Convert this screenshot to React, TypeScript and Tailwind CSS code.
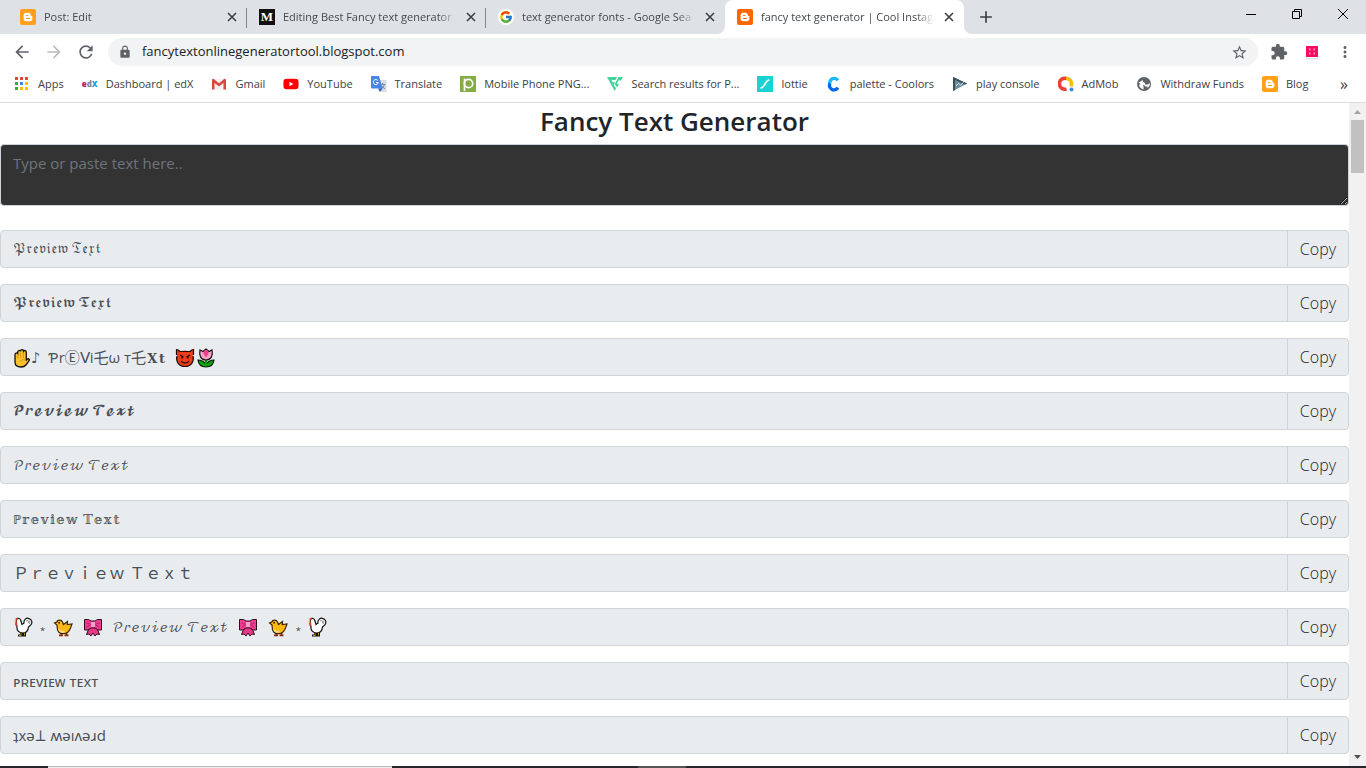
import type { ReactNode } from "react";
import { FaBloggerB, FaYoutube } from "react-icons/fa";
import { FcGoogle } from "react-icons/fc";
import {
  MdAdd,
  MdArrowBack,
  MdArrowForward,
  MdExtension,
  MdLock,
  MdMoreVert,
  MdRefresh,
  MdStarBorder,
} from "react-icons/md";

function Blogger({ color = "bg-[#ff9f1a]" }: { color?: string }) {
  return (
    <span className={`flex size-4 items-center justify-center rounded-xs text-white ${color}`}>
      <FaBloggerB size={10} />
    </span>
  );
}

function MediumLogo() {
  return (
    <span className="flex size-4 items-center justify-center bg-[#111] font-['Liberation_Serif',serif] text-[13px] font-bold text-white">
      M
    </span>
  );
}

function AppsGrid() {
  const colors = ["#ea4335", "#ea4335", "#ea4335", "#34a853", "#4285f4", "#fbbc04", "#34a853", "#fbbc04", "#fbbc04"];
  return (
    <svg width="16" height="16" viewBox="0 0 16 16">
      {colors.map((c, i) => (
        <rect key={i} x={1 + (i % 3) * 5} y={1 + Math.floor(i / 3) * 5} width="3" height="3" fill={c} />
      ))}
    </svg>
  );
}

function EdxLogo() {
  return (
    <span className="flex w-4 justify-center text-[8px] leading-4 font-extrabold text-[#b7206a]">
      e<span className="text-[#7d8a94]">d</span>
      <span className="text-[#1b9ce0]">X</span>
    </span>
  );
}

function GmailLogo() {
  return (
    <svg width="16" height="16" viewBox="0 0 16 16">
      <path d="M2 3h12v10.500H2z" fill="#f2f2f2" />
      <path d="M1 3.500v10h2.500V7L8 10.500 12.500 7v6.500H15v-10L13.500 2.800 8 7.200 2.500 2.800z" fill="#d54b3d" />
    </svg>
  );
}

function TranslateLogo() {
  return (
    <svg width="16" height="16" viewBox="0 0 16 16">
      <path d="M6 4h9.500v12H10z" fill="#d9dce0" />
      <path d="M9 8.500h5.500M11.700 7v1.500M13.500 8.500c-.6 2-1.800 3.300-3 4M10.500 9.500c.7 1.500 2 2.600 3.500 3.200" stroke="#6d8fae" fill="none" />
      <path d="M0 0h8l3.500 12.500H1a1 1 0 0 1-1-1z" fill="#4a85ee" />
      <path d="M7 12.500h4.500L9 16z" fill="#2b5fc4" />
      <path d="M6.800 4.500A2.500 2.500 0 1 0 7.300 6.500H5" stroke="#fff" fill="none" />
    </svg>
  );
}

function PngLogo() {
  return (
    <svg width="16" height="16" viewBox="0 0 16 16">
      <path d="M0 0h16v16H0z" fill="#84ab44" />
      <circle cx="8.500" cy="7.500" r="4.200" stroke="#fff" strokeWidth="1.700" fill="none" />
      <path d="M4.500 2.500v12.500" stroke="#fff" strokeWidth="1.700" />
    </svg>
  );
}

function FlatLogo() {
  return (
    <svg width="16" height="16" viewBox="0 0 16 16" fill="#46d39a">
      <path d="M0 1h10L8.500 4H4.500l1.200 2.300H8L6.800 9 9 12.500 7.700 15z" />
      <path d="M11.500 1H16l-2 3.500h-2.500L9.800 8H12l-2 3.500L7.800 8z" />
    </svg>
  );
}

function LottieLogo() {
  return (
    <svg width="16" height="16" viewBox="0 0 16 16">
      <path d="M0 0h16v16H0z" fill="#19d3d3" />
      <path d="M4 12c4-.5 4-7.500 8-8" stroke="#fff" strokeWidth="1.600" strokeLinecap="round" fill="none" />
    </svg>
  );
}

function CoolorsLogo() {
  return (
    <svg width="16" height="16" viewBox="0 0 16 16" fill="none" strokeWidth="3.400">
      <path d="M11.800 4.500A4.300 4.300 0 0 0 4 8" stroke="#18b8ff" />
      <path d="M4 7.500A4.300 4.300 0 0 0 11.800 11.500" stroke="#0064f5" />
    </svg>
  );
}

function PlayConsoleLogo() {
  return (
    <svg width="16" height="16" viewBox="0 0 16 16">
      <path d="M1 1l14 6.500L1 15z" fill="#6d8d9b" />
      <path d="M1 1l14 6.500-2 1L3 4v10l-2 1z" fill="#37505c" />
      <path d="M4 10l2.500-2.500 2 1.500L11.500 6.500" stroke="#cfe3ec" fill="none" />
    </svg>
  );
}

function AdMobLogo() {
  return (
    <svg width="16" height="16" viewBox="0 0 16 16" fill="none" strokeWidth="3.600">
      <path d="M8.500 2.500A5.500 5.500 0 1 0 8.500 13" stroke="#ea4335" />
      <path d="M8 2.500c3.500 0 5.500 2.200 5.500 5.500v2.500" stroke="#fbbc04" />
      <circle cx="13.500" cy="13.500" r="2" fill="#4285f4" />
    </svg>
  );
}

function Globe() {
  return (
    <svg width="16" height="16" viewBox="0 0 16 16">
      <circle cx="8" cy="8" r="7" fill="#5f6368" />
      <path d="M10 2.500L7 4v2l2 1v1.500h3L14 7c0 2-1 4-2.500 5V10.500H9.500L8 9H5.500L2.500 6.500" fill="#fff" />
      <path d="M3 8.500h3l1.500 1.500v3.500C5 13 3.200 11 3 8.500z" fill="#fff" />
    </svg>
  );
}

function CloseIcon() {
  return (
    <svg width="14" height="14" viewBox="0 0 14 14" stroke="currentColor" strokeWidth="1.600">
      <path d="M3 3l8 8M11 3l-8 8" />
    </svg>
  );
}

/* pixel style emoji */

function Hand() {
  return (
    <svg className="mx-px inline-block align-[-5px]" width="16" height="20" viewBox="0 0 16 20">
      <path
        d="M1 6.500c0-1.500 2-2 2.700-1V4c0-1.700 2.300-2 2.900-.8 0-2.200 3-2.200 3 0 .7-1.200 2.700-.8 2.700 1V12l1.200-1c1.300-.8 2.400.6 1.600 1.700l-3.200 4.300C10.700 18.500 9.500 19 7 19c-4 0-6-1.500-6-5z"
        fill="#fcc12e"
        stroke="#111"
        strokeWidth="1.300"
      />
      <path d="M3.800 6v4.500M6.600 4.500V10M9.400 4.500V10M6 14c1-2 3-3 5.500-2" stroke="#d0901a" strokeWidth=".8" fill="none" />
    </svg>
  );
}

function Devil() {
  return (
    <svg className="mx-px inline-block align-[-5px]" width="20" height="20" viewBox="0 0 20 20">
      <path
        d="M1.500 1.500c1.500 0 3 1 4.500 1.800 2.500-1 5.500-1 8 0 1.500-.8 3-1.800 4.500-1.800.5 2.500 0 4.500-.8 6C19.500 13.500 16 18.500 10 18.500S.5 13.500 2.300 7.500C1.500 6 1 4 1.500 1.500z"
        fill="#f03c18"
      />
      <path
        d="M1.500 7V1.500C3 1.500 4 2.500 5 3.500h10c1-1 2-2 3.500-2V7M2 8c-1.500 5.500 2 10.500 8 10.500S19.500 13.500 18 8"
        fill="none"
        stroke="#1a0b06"
        strokeWidth="1.200"
      />
      <path d="M5 7l3.500 2M15 7l-3.500 2M6 13c1.500 2.700 6.500 2.700 8 0" stroke="#1a0b06" strokeWidth="1.300" fill="none" />
      <path d="M6.300 8.500h1.600v2H6.300zM12.100 8.500h1.600v2h-1.600z" fill="#1a0b06" />
    </svg>
  );
}

function Tulip() {
  return (
    <svg className="inline-block align-[-5px]" width="20" height="20" viewBox="0 0 20 20">
      <path d="M10 19C5 19 2.500 16.500 2 12c3 0 5 .5 8 4 3-3.500 5-4 8-4-.5 4.500-3 7-8 7z" fill="#11a011" stroke="#0b1a0b" strokeWidth="1.200" />
      <path d="M9 11h2v6H9z" fill="#11a011" />
      <path d="M4 2l3 1.500L10 1l3 2.500L16 2c1 5-.5 10-6 10S3 7 4 2z" fill="#f5a3c7" stroke="#20080f" strokeWidth="1.200" />
      <path d="M8 2.500h4l.5 3L10 9.500 7.500 5.500z" fill="#ee3f8e" />
    </svg>
  );
}

function Chicken() {
  return (
    <svg className="inline-block align-[-5px]" width="20" height="20" viewBox="0 0 20 20">
      <path d="M5 17.500h4.500v2H5zM9.500 17.500H13v2H9.500zM7 14h6v4H7z" fill="#111" />
      <path
        d="M3.500 2C5 .8 7.500 1.500 7.800 3.500L9 7.500l2-1.500C10.500 3 13 .8 15.500 1.300c3 .5 4.200 3.700 2.700 6L15.500 10c-.3 3.500-2.500 6-5.700 6-4 0-6.300-3-5.800-6.500L3.200 7z"
        fill="#fff"
        stroke="#111"
        strokeWidth="1.200"
      />
      <path d="M13 4c1.500-1 3 0 2.500 2M15.500 3c1.700.8 1.700 2.800.5 4" stroke="#777" strokeWidth=".8" fill="none" />
      <path d="M2.500 1.500L5 .5v2L3 4zM2.300 5.500h1.900v3.200H2.300z" fill="#e03a2b" />
      <path d="M.8 4.800l2.500-1v2z" fill="#f2a51c" />
      <path d="M8 15.500v3M6 18.500h2.500M11.500 15.500v3" stroke="#b08a18" />
    </svg>
  );
}

function Chick() {
  return (
    <svg className="mx-px inline-block align-[-5px]" width="20" height="20" viewBox="0 0 20 20">
      <path d="M6 18.300h4M11.500 18.300h4M8.500 15.500v3M13.500 15.500v3" stroke="#8c2708" strokeWidth="1.700" />
      <path
        d="M1.500 6l2.200-1C4.500 2.500 8.500 2.300 9.500 5l1 2.500 4-3-.2 3 4.700-.5-1.500 4-1 2c-1.200 2.500-3.500 3.700-6.500 3.700C6.500 16.700 4 14 4.300 11L4 8z"
        fill="#fdb813"
        stroke="#3a2508"
        strokeWidth="1.200"
      />
      <path d="M5 10c.5 3 3 4.300 7 4l-2 2C7 15.700 5 14 5 10z" fill="#ffdc84" />
      <path d="M5.300 5h1.600v1.600H5.300z" fill="#241505" />
    </svg>
  );
}

function Bow() {
  return (
    <svg className="mx-px inline-block align-[-5px]" width="20" height="20" viewBox="0 0 20 20">
      <path d="M6.500 10l-3 7.500 2.500-.5 2 2 2-3 2 3 2-2 2.500.5-3-7.500z" fill="#e8388a" stroke="#330a1e" />
      <path d="M1.500 2.500h4L8 4h4l2.500-1.500h4v10.500H15l-3-2H8l-3 2H1.500z" fill="#ee3d8f" stroke="#330a1e" />
      <path d="M8 5h4v5H8z" fill="#f7a1ca" />
      <path d="M3.500 6l4 1.300M3.500 10l4-2M16.500 6l-4 1.300M16.500 10l-4-2" stroke="#b82070" />
    </svg>
  );
}

const tabs = [
  { title: "Post: Edit", icon: <Blogger /> },
  { title: "Editing Best Fancy text generator", icon: <MediumLogo /> },
  {
    title: "text generator fonts - Google Sea",
    icon: (
      <span className="flex size-4 items-center justify-center rounded-full bg-white">
        <FcGoogle size={14} />
      </span>
    ),
  },
  { title: "fancy text generator | Cool Instag", icon: <Blogger color="bg-[#ff6600]" />, active: true },
];

const bookmarks = [
  { label: "Apps", icon: <AppsGrid /> },
  { label: "Dashboard | edX", icon: <EdxLogo /> },
  { label: "Gmail", icon: <GmailLogo /> },
  { label: "YouTube", icon: <FaYoutube size={16} color="#ff0000" /> },
  { label: "Translate", icon: <TranslateLogo /> },
  { label: "Mobile Phone PNG...", icon: <PngLogo /> },
  { label: "Search results for P...", icon: <FlatLogo /> },
  { label: "lottie", icon: <LottieLogo /> },
  { label: "palette - Coolors", icon: <CoolorsLogo /> },
  { label: "play console", icon: <PlayConsoleLogo /> },
  { label: "AdMob", icon: <AdMobLogo /> },
  { label: "Withdraw Funds", icon: <Globe /> },
  { label: "Blog", icon: <Blogger /> },
];

const star = <span className="mx-0.5 text-[10px]">⋆</span>;

// the math alphabets run wide, so they are set smaller than plain letters
const previews: { size: string; text: ReactNode }[] = [
  { size: "text-xs", text: "𝔓𝔯𝔢𝔳𝔦𝔢𝔴 𝔗𝔢𝔵𝔱" },
  { size: "text-xs", text: "𝕻𝖗𝖊𝖛𝖎𝖊𝖜 𝕿𝖊𝖝𝖙" },
  {
    size: "text-[15px]",
    text: (
      <>
        <Hand />♪&nbsp; ƤrⒺᐯi乇ω т乇<span className="text-[13px]">𝐗𝐭</span>&nbsp; <Devil />
        <Tulip />
      </>
    ),
  },
  { size: "text-xs", text: "𝓟𝓻𝓮𝓿𝓲𝓮𝔀 𝓣𝓮𝔁𝓽" },
  { size: "text-[13px]", text: "𝒫𝓇𝑒𝓋𝒾𝑒𝓌 𝒯𝑒𝓍𝓉" },
  { size: "text-[13px]", text: "ℙ𝕣𝕖𝕧𝕚𝕖𝕨 𝕋𝕖𝕩𝕥" },
  { size: "text-base", text: "Ｐｒｅｖｉｅｗ Ｔｅｘｔ" },
  {
    size: "text-base",
    text: (
      <>
        <Chicken /> {star} <Chick />&nbsp; <Bow />&nbsp; <span className="text-[13px]">𝒫𝓇𝑒𝓋𝒾𝑒𝓌 𝒯𝑒𝓍𝓉</span>&nbsp; <Bow />&nbsp; <Chick /> {star}{" "}
        <Chicken />
      </>
    ),
  },
  { size: "text-[15px]", text: "ᴘʀᴇᴠɪᴇᴡ ᴛᴇxᴛ" },
  { size: "text-[15px]", text: "ʇxǝ⊥ ʍǝıʌǝɹd" },
];

function TabStrip() {
  return (
    <div className="flex h-[34px] bg-[#dee1e6] pl-2">
      {tabs.map((tab, i) => (
        <div
          key={tab.title}
          className={`relative flex w-[239px] items-center gap-2 pr-2 pl-3 ${tab.active ? "rounded-t-lg bg-white" : ""}`}
        >
          {tab.icon}
          <span className="flex-1 overflow-hidden mask-r-from-90% text-[11px] whitespace-nowrap text-[#45494d]">{tab.title}</span>
          <button aria-label={`Close ${tab.title}`} className="text-[#3c4043]">
            <CloseIcon />
          </button>
          {i < 2 && <span className="absolute top-2 right-0 h-5 w-px bg-[#80868b]" />}
          {tab.active && (
            <>
              <span className="absolute bottom-0 -left-2 size-2 bg-white">
                <span className="block size-2 rounded-br-lg bg-[#dee1e6]" />
              </span>
              <span className="absolute -right-2 bottom-0 size-2 bg-white">
                <span className="block size-2 rounded-bl-lg bg-[#dee1e6]" />
              </span>
            </>
          )}
        </div>
      ))}
      <button aria-label="New tab" className="ml-3 text-[#3c4043]">
        <MdAdd size={20} />
      </button>
      <div className="ml-auto flex h-7">
        <button aria-label="Minimize" className="flex w-[46px] items-center justify-center">
          <span className="h-px w-2.5 bg-black" />
        </button>
        <button aria-label="Restore" className="flex w-[46px] items-center justify-center">
          <svg width="10" height="10" viewBox="0 0 10 10" fill="none" stroke="#000">
            <path d="M.5 2.500h7v7h-7zM2.500 2.500v-2h7v7h-2" />
          </svg>
        </button>
        <button aria-label="Close window" className="flex w-[46px] items-center justify-center">
          <svg width="10" height="10" viewBox="0 0 10 10" stroke="#000">
            <path d="M0 0l10 10M10 0L0 10" />
          </svg>
        </button>
      </div>
    </div>
  );
}

function Toolbar() {
  return (
    <div className="flex h-9 items-center bg-white pr-3 pl-3 text-[#5f6368]">
      <div className="flex gap-3">
        <button aria-label="Back">
          <MdArrowBack size={20} />
        </button>
        <button aria-label="Forward" className="text-[#babcbe]">
          <MdArrowForward size={20} />
        </button>
        <button aria-label="Reload">
          <MdRefresh size={20} />
        </button>
      </div>
      <div className="ml-3 flex h-7 flex-1 items-center gap-2.5 rounded-full bg-[#f1f3f4] pr-2.5 pl-2.5">
        <MdLock size={14} />
        <input
          aria-label="Address"
          defaultValue="fancytextonlinegeneratortool.blogspot.com"
          className="flex-1 bg-transparent text-[13px] text-[#202124] outline-none"
        />
        <button aria-label="Bookmark this page">
          <MdStarBorder size={17} />
        </button>
      </div>
      <div className="ml-3 flex items-center gap-4">
        <button aria-label="Extensions">
          <MdExtension size={18} />
        </button>
        <button aria-label="Color picker extension">
          <svg width="16" height="16" viewBox="0 0 16 16">
            <path d="M2 2h12v11H2z" fill="#fb0a63" />
            <path d="M5 4.500h1.500v2H5zM9.500 4.500H11v2H9.500zM5 8.500h1.500v2H5zM9.500 8.500H11v2H9.500z" fill="#ff9cc2" />
            <path d="M2 14.500h12" stroke="#ddd" />
          </svg>
        </button>
        <button aria-label="Menu">
          <MdMoreVert size={18} />
        </button>
      </div>
    </div>
  );
}

function BookmarksBar() {
  return (
    <nav className="flex h-[33px] items-center gap-[18px] border-b border-[#d9dbdd] bg-white pb-1 pl-3.5 text-[11px] whitespace-nowrap text-[#3c4043]">
      {bookmarks.map((b) => (
        <a key={b.label} href="#" className="flex shrink-0 items-center gap-2">
          {b.icon}
          {b.label}
        </a>
      ))}
      <button aria-label="More bookmarks" className="mr-[18px] ml-auto text-base">
        »
      </button>
    </nav>
  );
}

function Scrollbar() {
  return (
    <div className="flex w-[17px] flex-col items-center bg-[#f1f1f1]">
      <svg width="17" height="17" viewBox="0 0 17 17">
        <path d="M5 11h7L8.500 7z" fill="#a3a3a3" />
      </svg>
      <div className="h-[53px] w-[13px] bg-[#c1c1c1]" />
      <svg className="mt-auto" width="17" height="17" viewBox="0 0 17 17">
        <path d="M5 6h7l-3.500 4z" fill="#505050" />
      </svg>
    </div>
  );
}

function PreviewRow({ size, children }: { size: string; children: ReactNode }) {
  return (
    <div className="mb-4 flex h-[38px] items-stretch rounded border border-[#ced4da] bg-[#e9ecef] text-[#495057]">
      <output className={`flex-1 self-center overflow-hidden px-3 leading-9! whitespace-nowrap ${size}`}>{children}</output>
      <button className="border-l border-[#ced4da] px-3 text-base font-light text-[#212529]">Copy</button>
    </div>
  );
}

export default function App() {
  return (
    <div className="flex h-screen flex-col overflow-hidden bg-white font-['Open_Sans','Noto_Sans','DejaVu_Math_TeX_Gyre','Noto_Sans_CJK_JP',sans-serif]">
      <header>
        <TabStrip />
        <Toolbar />
        <BookmarksBar />
      </header>
      <div className="flex min-h-0 flex-1">
        <main className="flex-1 overflow-hidden">
          <h1 className="mb-1.5 pt-px text-center text-[26px] leading-[34px] font-semibold text-[#212529]">Fancy Text Generator</h1>
          <textarea
            aria-label="Text to convert"
            placeholder="Type or paste text here.."
            rows={2}
            className="mb-6 block h-[62px] w-full rounded border border-[#ced4da] bg-[#333] px-3 py-1.5 text-[15px] leading-6 text-white placeholder-[#6c757d]"
          />
          {previews.map((p, i) => (
            <PreviewRow key={i} size={p.size}>
              {p.text}
            </PreviewRow>
          ))}
        </main>
        <Scrollbar />
      </div>
      <footer className="flex h-0.5 shrink-0 bg-[#26272b]">
        <span className="ml-12 w-[344px] border-t border-[#bbb] bg-[#eee]" />
        <span className="ml-[246px] w-12 bg-[#555]" />
      </footer>
    </div>
  );
}
